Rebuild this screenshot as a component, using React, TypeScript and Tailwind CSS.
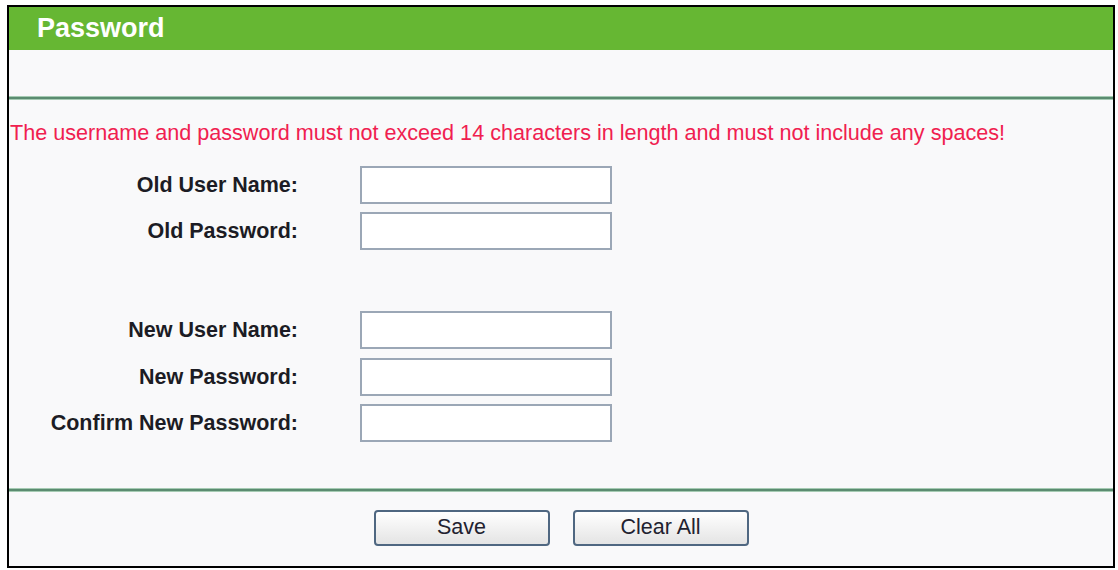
import React from "react";

const FONT = { fontFamily: '"Liberation Sans", Arial, sans-serif' };

// label + text box, one row of the form
function Field({ label }: { label: string }) {
  return (
    <>
      <div className="flex h-[38px] items-center justify-end text-[21.5px] font-bold leading-[24px] text-[#1c1c24]">
        {label}
      </div>
      <input
        type="text"
        className="h-[38px] w-[252px] border-2 border-[#9ba7b6] bg-white outline-none"
      />
    </>
  );
}

function Divider() {
  return <div className="h-[4px] border-y border-[#a6cbb3] bg-[#5b8c70]" />;
}

function Button({ children }: { children: React.ReactNode }) {
  return (
    <button className="h-[36px] w-[176px] rounded-[4px] border-2 border-[#4f6781] bg-gradient-to-b from-[#ffffff] to-[#e4e4e4] text-[21.5px] leading-none text-[#222230]">
      {children}
    </button>
  );
}

export default function App() {
  return (
    <div className="h-[570px] w-[1118px] bg-white pl-[7px] pt-[5px]" style={FONT}>
      <div className="flex h-[563px] w-[1108px] flex-col border-2 border-black bg-[#f9f9fa]">
        {/* Title bar */}
        <div className="flex h-[43px] items-center bg-[#66b733] pl-[28px] text-[27px] font-bold text-white">
          Password
        </div>
        <div className="h-[46px]" />
        <Divider />

        <p className="mt-[21px] pl-[1px] text-[21.6px] leading-[24px] text-[#f0204f]">
          The username and password must not exceed 14 characters in length and must not include any spaces!
        </p>

        <div className="mt-[21px] grid grid-cols-[289px_252px] gap-x-[62px] gap-y-[8px]">
          <Field label="Old User Name:" />
          <Field label="Old Password:" />
        </div>

        <div className="mt-[61px] grid grid-cols-[289px_252px] gap-x-[62px] gap-y-[8.5px]">
          <Field label="New User Name:" />
          <Field label="New Password:" />
          <Field label="Confirm New Password:" />
        </div>

        <div className="mt-[46px]">
          <Divider />
        </div>

        <div className="mt-[18px] flex justify-center gap-[23px]">
          <Button>Save</Button>
          <Button>Clear All</Button>
        </div>
      </div>
    </div>
  );
}
